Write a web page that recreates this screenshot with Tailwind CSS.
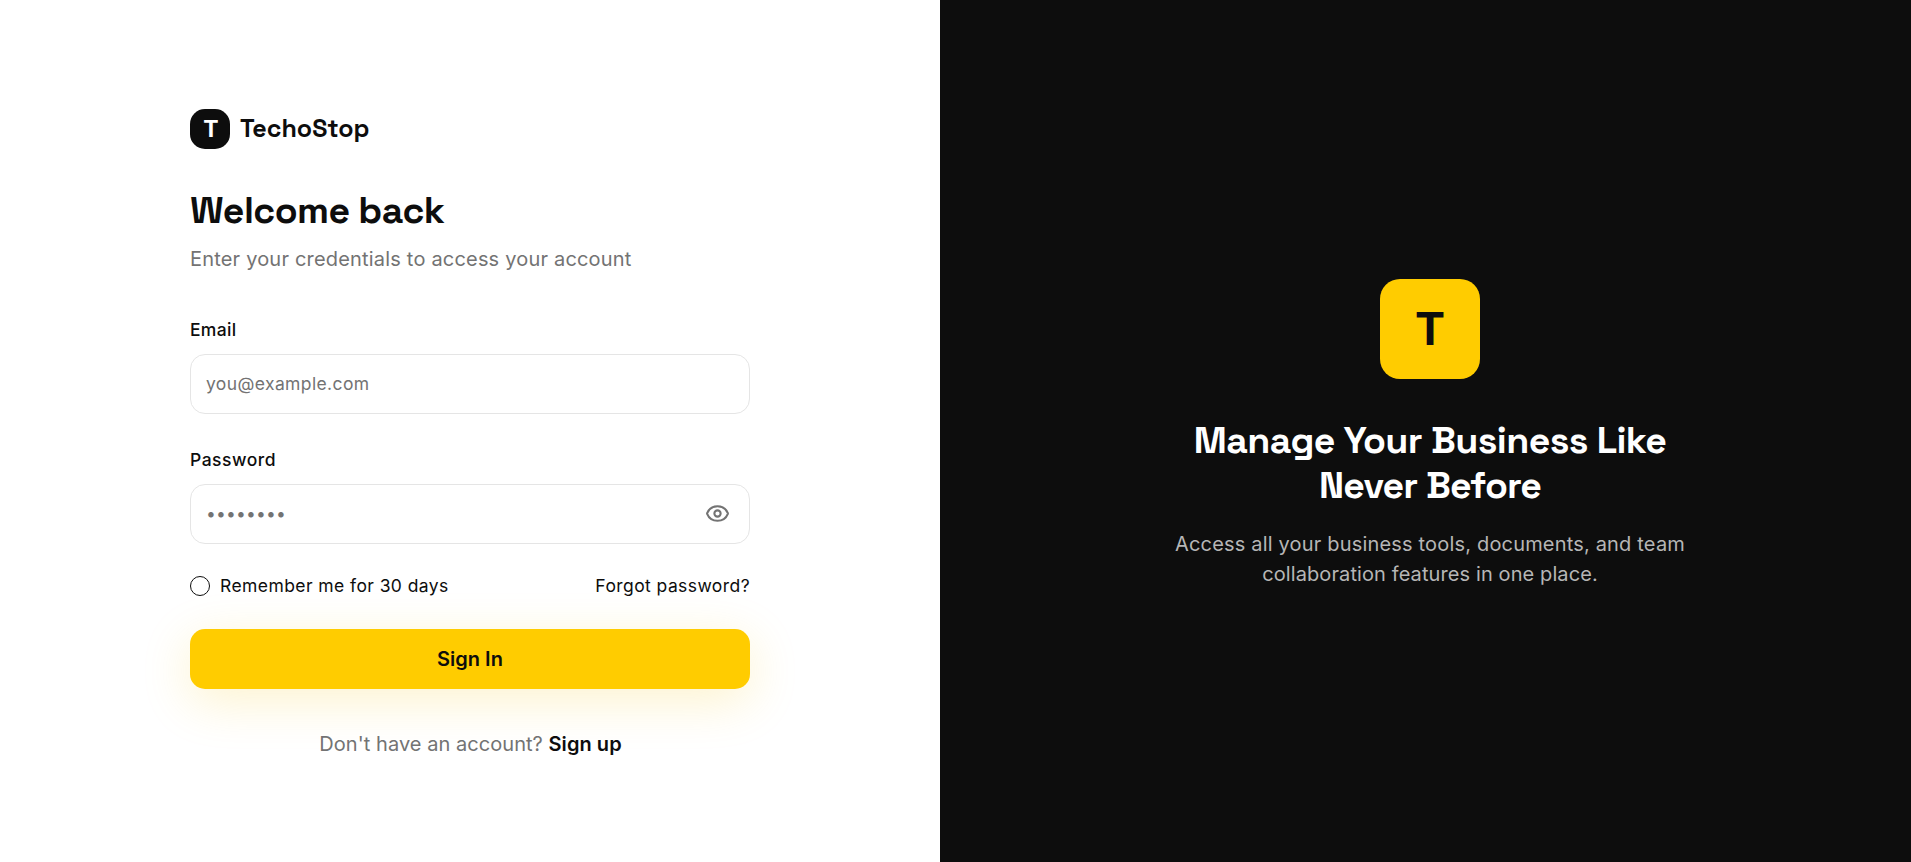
<!DOCTYPE html>
<html lang="en">
<head>
  <meta charset="UTF-8" />
  <meta name="viewport" content="width=device-width, initial-scale=1.0" />
  <title>TechoStop - Sign In</title>
  <script src="https://cdn.jsdelivr.net/npm/@tailwindcss/browser@4"></script>
</head>
<body class="h-screen overflow-hidden bg-white font-['Inter',sans-serif] text-[#0d0d0d]">
  <div class="flex h-full">
    <!-- Sign in form -->
    <main class="w-[940px] shrink-0 pl-[190px] pr-[190px] pt-[109px]">
      <div class="flex items-center gap-2.5">
        <div class="flex size-10 items-center justify-center rounded-[15px] bg-[#0d0d0d] pl-0.5 text-[23px] font-bold text-white">T</div>
        <span class="font-['Space_Grotesk','Inter',sans-serif] text-[25px] leading-[38px] h-10 font-bold">TechoStop</span>
      </div>

      <h1 class="mt-[39px] h-[46px] whitespace-nowrap font-['Space_Grotesk','Inter',sans-serif] text-[37.5px] leading-[45px] font-bold tracking-[-0.6px]">Welcome back</h1>
      <p class="mt-2.5 h-[30px] whitespace-nowrap text-[20px] leading-[30px] tracking-[0.19px] text-[#737373]">Enter your credentials to access your account</p>

      <form class="mt-[43px]">
        <label for="email" class="block h-[25px] text-[17.5px] leading-[25px] font-medium tracking-[0.3px]">Email</label>
        <input id="email" type="email" placeholder="you@example.com" class="mt-3 block h-[60px] w-[560px] rounded-[15px] border border-[#e5e5e5] bg-white px-[15px] pb-0.5 text-[17.5px] tracking-[0.38px] placeholder:text-[#737373]">

        <label for="password" class="mt-[33px] block h-[25px] text-[17.5px] leading-[25px] font-medium tracking-[0.5px]">Password</label>
        <div class="relative mt-3">
          <input id="password" type="password" placeholder="••••••••" class="block h-[60px] w-[560px] rounded-[15px] border border-[#e5e5e5] bg-white pl-[15px] pr-[60px] pb-0.5 text-[17.5px] tracking-[0.15px] placeholder:text-[#737373]">
          <button type="button" aria-label="Show password" class="absolute top-[17px] right-[20px] text-[#737373]">
            <svg class="size-[25px]" viewBox="0 0 24 24" fill="none" stroke="currentColor" stroke-width="2" stroke-linecap="round" stroke-linejoin="round">
              <path d="M2.062 12.348a1 1 0 0 1 0-.696 10.75 10.75 0 0 1 19.876 0 1 1 0 0 1 0 .696 10.75 10.75 0 0 1-19.876 0" />
              <circle cx="12" cy="12" r="3" />
            </svg>
          </button>
        </div>

        <div class="mt-[29px] flex h-[26px] items-center justify-between text-[17.5px] leading-[26px] tracking-[0.42px]">
          <label class="flex items-center gap-2.5">
            <input type="checkbox" class="size-5 appearance-none rounded-full border border-[#0d0d0d] bg-white">
            <span>Remember me for 30 days</span>
          </label>
          <a href="#">Forgot password?</a>
        </div>

        <button type="submit" class="mt-[30px] block h-[60px] w-[560px] rounded-[15px] bg-[#ffcc00] text-[20px] font-semibold shadow-[0_12px_50px_rgba(245,195,0,0.2)]">Sign In</button>
      </form>

      <p class="mt-10 pl-px text-center text-[20px] leading-[30px] tracking-[0.05px] text-[#737373]">Don't have an account? <a href="#" class="font-semibold text-[#0d0d0d]">Sign up</a></p>
    </main>

    <!-- Brand panel -->
    <aside class="flex flex-1 flex-col items-center bg-[#0d0d0d] pt-[279px] pl-[9px] text-center">
      <div class="flex size-[100px] items-center justify-center rounded-[20px] bg-[#ffcc00] text-[45px] font-bold">T</div>
      <h2 class="mt-[39px] mb-px w-[560px] font-['Space_Grotesk','Inter',sans-serif] text-[37.5px] leading-[45px] font-bold tracking-[-0.6px] text-white">Manage Your Business Like<br><span class="tracking-[-0.9px]">Never Before</span></h2>
      <p class="mt-5 w-[560px] text-[20px] leading-[30px] tracking-[0.18px] text-[#b6b6b6]">Access all your business tools, documents, and team<br><span class="tracking-[0.1px]">collaboration features in one place.</span></p>
    </aside>
  </div>
</body>
</html>
